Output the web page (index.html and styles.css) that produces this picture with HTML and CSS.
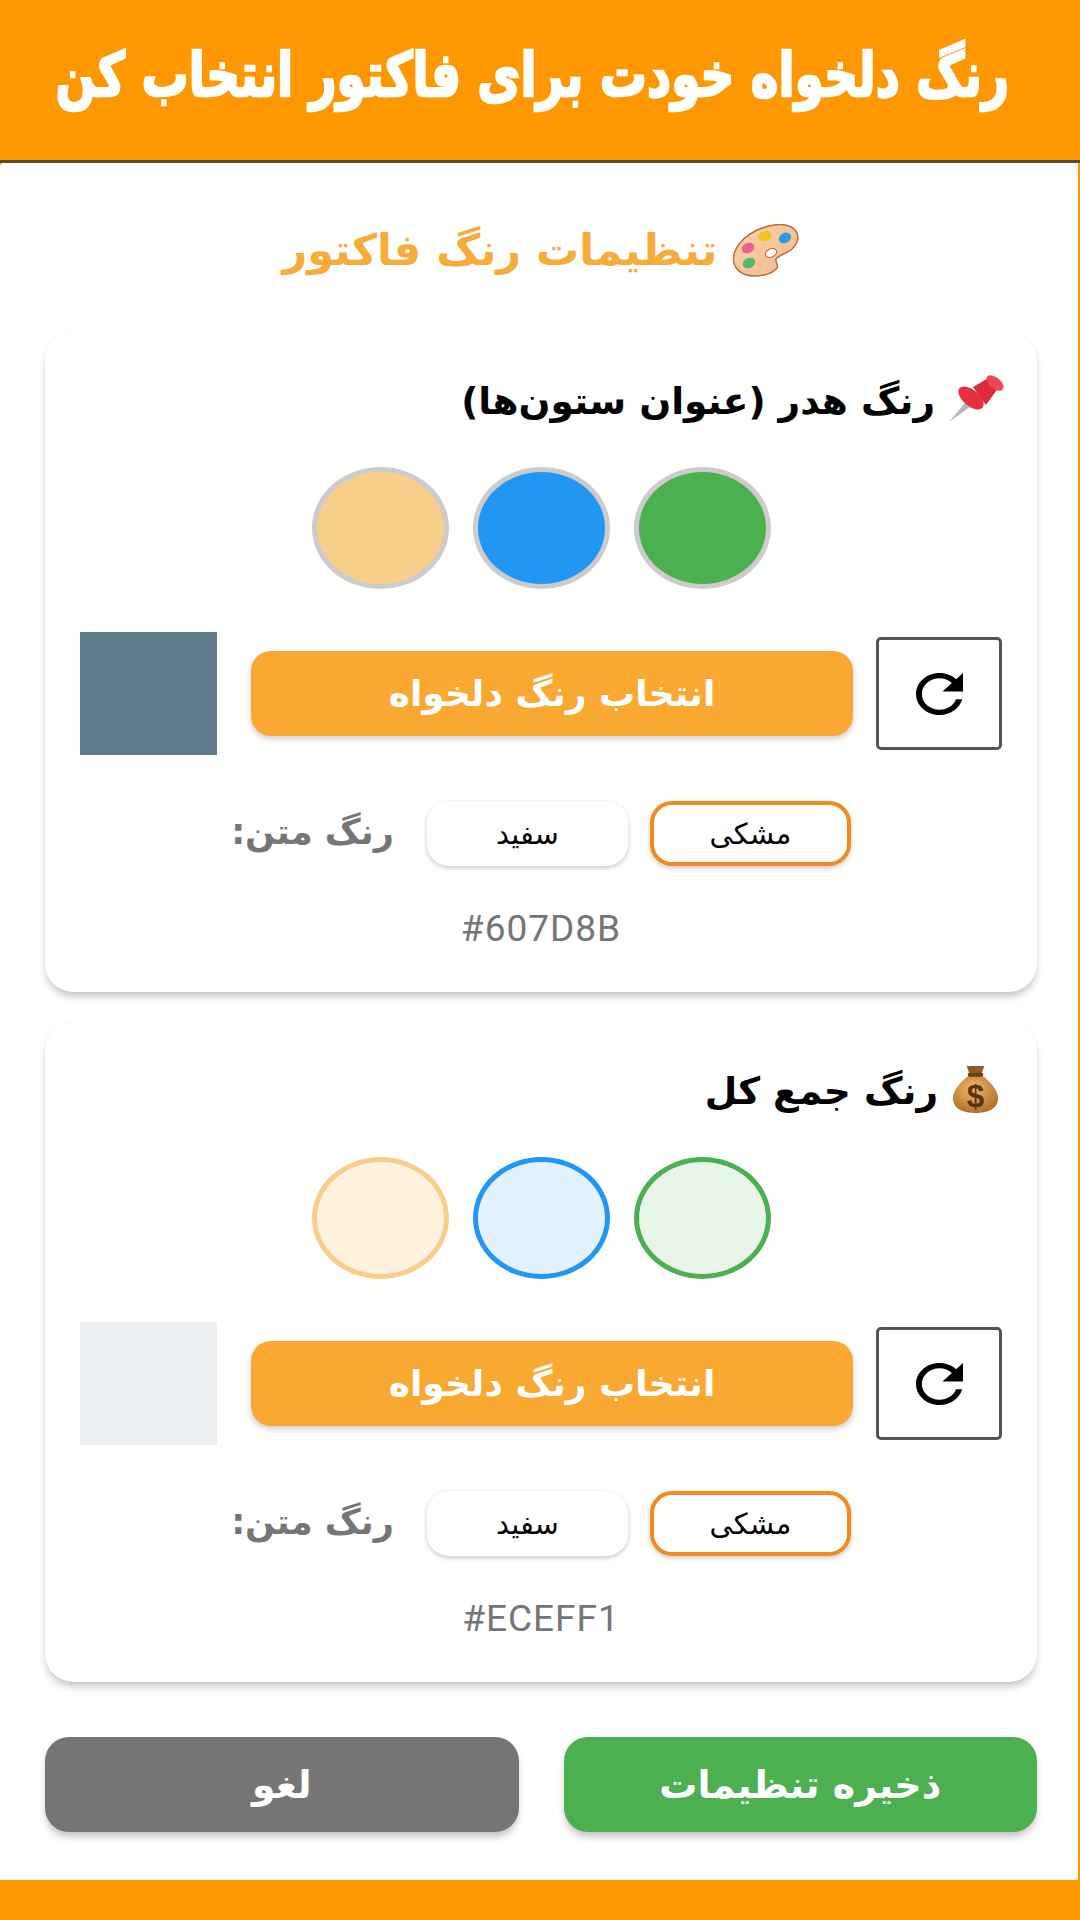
FILE: index.html
```html
<!DOCTYPE html>
<html lang="fa" dir="rtl">
<head>
<meta charset="utf-8">
<title>تنظیمات رنگ فاکتور</title>
<link rel="stylesheet" href="styles.css">
</head>
<body>
<svg class="defs" width="0" height="0" aria-hidden="true">
  <defs>
    <symbol id="refresh" viewBox="4 4 16 16" preserveAspectRatio="none">
      <path d="M17.65 6.35C16.2 4.9 14.21 4 12 4c-4.42 0-7.99 3.58-7.99 8s3.57 8 7.99 8c3.73 0 6.84-2.55 7.73-6h-2.08c-.82 2.33-3.04 4-5.65 4-3.31 0-6-2.69-6-6s2.69-6 6-6c1.66 0 3.14.69 4.22 1.78L13 11h7V4l-2.35 2.35z"/>
    </symbol>
    <radialGradient id="bag" cx="45%" cy="35%" r="70%">
      <stop offset="0" stop-color="#f0b868"/><stop offset="1" stop-color="#ad6c28"/>
    </radialGradient>
    <linearGradient id="wood" x1="0" y1="0" x2="1" y2="1">
      <stop offset="0" stop-color="#fbd3ab"/><stop offset="1" stop-color="#f3b98a"/>
    </linearGradient>
  </defs>
</svg>
<header class="topbar"><h1 class="topbar-title">رنگ دلخواه خودت برای فاکتور انتخاب کن</h1></header>
<main class="panel">
  <h2 class="panel-title">
    <svg class="palette" viewBox="0 0 66 53" aria-hidden="true">
      <path d="M65 13C64 3 53-1 41 1 23 4 6 14 1 30c-3 13 6 22 21 22 9 0 18-3 22-8 2-3-2-5-1-9 2-4 11-5 16-10 4-4 6-8 6-12z" fill="url(#wood)" stroke="#b5703a" stroke-width="1.5"/>
      <ellipse cx="38" cy="29" rx="6" ry="4" transform="rotate(-25 38 29)" fill="#fff" stroke="#a96a38"/>
      <ellipse cx="32" cy="12" rx="6.5" ry="5" transform="rotate(-20 32 12)" fill="#f2c41c"/>
      <ellipse cx="52" cy="14" rx="6.5" ry="5" transform="rotate(-30 52 14)" fill="#2c9be0"/>
      <ellipse cx="15" cy="24" rx="6.5" ry="5" transform="rotate(-20 15 24)" fill="#ee5f8d"/>
      <ellipse cx="16" cy="39" rx="6.5" ry="5" transform="rotate(-20 16 39)" fill="#53b86c"/>
    </svg>
    <span>تنظیمات رنگ فاکتور</span>
  </h2>

  <section class="card">
    <h3 class="card-title">
      <svg class="emoji emoji-pin" viewBox="0 0 55 48" aria-hidden="true">
        <path d="M0 48L16 29l5 4z" fill="#b5b9bd"/>
        <path d="M24 13L41 3l9 10-13 18z" fill="#d92d3c"/>
        <ellipse cx="22" cy="24" rx="15" ry="8" transform="rotate(40 22 24)" fill="#e2313f"/>
        <ellipse cx="46" cy="9" rx="10" ry="5.5" transform="rotate(40 46 9)" fill="#ef4655"/>
      </svg>
      <span>رنگ هدر (عنوان ستون‌ها)</span>
    </h3>
    <div class="dots">
      <span class="dot dot-green"></span><span class="dot dot-blue"></span><span class="dot dot-peach"></span>
    </div>
    <div class="pick-row">
      <button class="reset"><svg class="reset-icon"><use href="#refresh"/></svg></button>
      <button class="pick">انتخاب رنگ دلخواه</button>
      <span class="swatch swatch-slate"></span>
    </div>
    <div class="text-row">
      <button class="choice choice-on">مشکی</button>
      <button class="choice">سفید</button>
      <span class="text-label">رنگ متن:</span>
    </div>
    <p class="hex" dir="ltr">#607D8B</p>
  </section>

  <section class="card">
    <h3 class="card-title">
      <svg class="emoji emoji-bag" viewBox="0 0 48 50" aria-hidden="true">
        <path d="M15 2h18l-4 11h-10z" fill="#8f5a24"/>
        <path d="M17 12C8 19 1 27 1 35c0 11 11 15 23 15s23-4 23-15c0-8-7-16-16-23z" fill="url(#bag)"/>
        <rect x="16" y="9" width="16" height="4" rx="2" fill="#6d421a"/>
        <text x="24" y="44" class="emoji-dollar">$</text>
      </svg>
      <span>رنگ جمع کل</span>
    </h3>
    <div class="dots">
      <span class="dot dot-green-soft"></span><span class="dot dot-blue-soft"></span><span class="dot dot-peach-soft"></span>
    </div>
    <div class="pick-row">
      <button class="reset"><svg class="reset-icon"><use href="#refresh"/></svg></button>
      <button class="pick">انتخاب رنگ دلخواه</button>
      <span class="swatch swatch-pale"></span>
    </div>
    <div class="text-row">
      <button class="choice choice-on">مشکی</button>
      <button class="choice">سفید</button>
      <span class="text-label">رنگ متن:</span>
    </div>
    <p class="hex" dir="ltr">#ECEFF1</p>
  </section>

  <div class="actions">
    <button class="action action-save">ذخیره تنظیمات</button>
    <button class="action action-cancel">لغو</button>
  </div>
</main>
<div class="bottombar"></div>
</body>
</html>
```
FILE: styles.css
```css
* { box-sizing: border-box; }
html, body { margin: 0; padding: 0; }
body {
  width: 1080px;
  height: 1920px;
  background: #ff9800;
  display: flex;
  flex-direction: column;
  font-family: "DejaVu Sans", sans-serif;
  overflow: hidden;
}
.defs { position: absolute; }
.topbar {
  height: 163px;
  flex: none;
  background: #ff9800;
  border-bottom: 3px solid #5a4a30;
  padding: 40px 71px 0 0;
}
.topbar-title {
  margin: 0;
  color: #fff;
  font-size: 47px;
  font-weight: 700;
  line-height: 70px;
  white-space: nowrap;
  -webkit-text-stroke: 2px #fff;
  transform: scaleY(1.3);
}
.panel {
  flex: 1;
  margin-left: 0;
  margin-right: 2px;
  background: #fff;
  border-top-left-radius: 4px;
  padding: 57px 41px 0 45px;
}
.panel-title {
  margin: 0 0 52px;
  height: 60px;
  display: flex;
  justify-content: center;
  align-items: center;
  gap: 16px;
  color: #f7ab38;
  font-size: 43px;
  font-weight: 700;
  line-height: 60px;
}
.palette { width: 66px; height: 53px; flex: none; }
.card {
  height: 660px;
  margin-bottom: 30px;
  padding: 41px 35px 0;
  background: #fff;
  border-radius: 28px;
  box-shadow: 0 0 1px rgba(0,0,0,.1), 0 6px 8px -2px rgba(0,0,0,.25);
}
.card-title {
  margin: 0;
  height: 50px;
  display: flex;
  align-items: center;
  gap: 14px;
  color: #000;
  font-size: 37.5px;
  font-weight: 700;
  line-height: 50px;
}
.card-title span { padding-top: 6px; }
.emoji { flex: none; }
.emoji-pin { width: 55px; height: 48px; margin-right: -2px; }
.emoji-bag { width: 47px; height: 49px; margin-right: 3px; }
.emoji-dollar { font: 700 32px "Liberation Sans", sans-serif; fill: #5b3210; text-anchor: middle; }
.dots {
  margin-top: 44px;
  display: flex;
  justify-content: center;
  gap: 24px;
}
.dot {
  width: 137px;
  height: 122px;
  border-radius: 50%;
  border: 5px solid #ccc;
}
.dot-green { background: #4caf50; }
.dot-blue { background: #2196f3; }
.dot-peach { background: #f9ce8a; }
.dot-green-soft { background: #e8f5e9; border-color: #4caf50; }
.dot-blue-soft { background: #e3f2fd; border-color: #2196f3; }
.dot-peach-soft { background: #fff3e0; border-color: #f9ce8a; }
.pick-row {
  margin-top: 43px;
  height: 123px;
  display: flex;
  align-items: center;
}
.reset {
  width: 126px;
  height: 113px;
  flex: none;
  padding: 0;
  display: flex;
  align-items: center;
  justify-content: center;
  background: #fff;
  border: 3px solid #555;
  border-radius: 5px;
}
.reset-icon { width: 47px; height: 42px; fill: #000; }
.pick {
  flex: 1;
  height: 85px;
  margin: 0 23px 0 34px;
  border: 0;
  border-radius: 20px;
  background: #f9a932;
  color: #fff;
  font: 700 36px "DejaVu Sans", sans-serif;
  box-shadow: 0 3px 6px rgba(0,0,0,.2);
}
.swatch { width: 137px; height: 123px; flex: none; }
.swatch-slate { background: #607d8b; }
.swatch-pale { background: #eceff1; }
.text-row {
  margin-top: 46px;
  height: 65px;
  display: flex;
  justify-content: center;
  align-items: center;
  gap: 22px;
}
.choice {
  width: 201px;
  height: 65px;
  background: #fff;
  border: 0;
  border-radius: 22px;
  color: #000;
  font: 400 29px "DejaVu Sans", sans-serif;
  box-shadow: 0 2px 5px rgba(0,0,0,.22);
}
.choice-on { border: 4px solid #f08c1e; }
.text-label {
  margin: 0 11px 4px 0;
  color: #757575;
  font-size: 35px;
  font-weight: 700;
  white-space: nowrap;
}
.hex {
  margin: 41px 0 0;
  height: 44px;
  text-align: center;
  color: #757575;
  font-family: Roboto, sans-serif;
  font-size: 37px;
  letter-spacing: 1px;
  line-height: 44px;
}
.actions {
  margin-top: 55px;
  display: flex;
  gap: 45px;
}
.action {
  flex: 1;
  height: 95px;
  border: 0;
  border-radius: 24px;
  color: #fff;
  font: 700 38px "DejaVu Sans", sans-serif;
  box-shadow: 0 6px 8px -2px rgba(0,0,0,.28);
}
.action-save { background: #4caf50; }
.action-cancel { background: #757575; }
.bottombar { height: 40px; flex: none; background: #ff9800; }
```
